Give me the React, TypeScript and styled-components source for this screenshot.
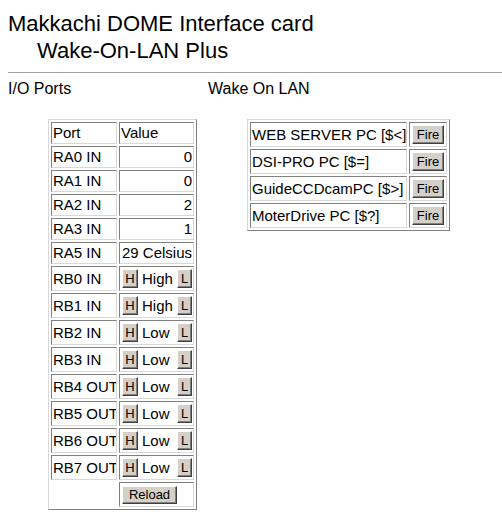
import React from 'react';
import styled, { createGlobalStyle } from 'styled-components';

const GlobalStyle = createGlobalStyle`
  html, body {
    margin: 0;
    padding: 0;
    background: #ffffff;
  }
  body {
    font-family: "Liberation Sans", Arial, sans-serif;
    color: #000000;
  }
`;

const Page = styled.div`
  padding: 10px 0 0 8px;
`;

const Title = styled.h1`
  margin: 0;
  font-size: 22px;
  font-weight: normal;
  line-height: 27px;
`;

const SubTitle = styled.span`
  display: block;
  padding-left: 29px;
`;

const Rule = styled.hr`
  height: 0;
  margin: 8px 0 7px;
  border: 0;
  border-top: 1px solid #a0a0a0;
`;

const Sections = styled.div`
  display: flex;
`;

const Section = styled.section<{ $width?: number; $indent: number }>`
  width: ${p => (p.$width ? `${p.$width}px` : 'auto')};
  flex: ${p => (p.$width ? 'none' : '1')};

  table {
    margin-left: ${p => p.$indent}px;
  }
`;

const Heading = styled.div`
  font-size: 16px;
  line-height: 18px;
  margin-bottom: 21px;
`;

const Grid = styled.table`
  border-collapse: separate;
  border-spacing: 2px;
  empty-cells: hide;
  border: 1px solid;
  border-color: #d8d8d8 #808080 #808080 #d8d8d8;
  font-size: 15px;
`;

const Cell = styled.td<{ $w: number; $h: number; $align?: 'left' | 'right' }>`
  box-sizing: border-box;
  width: ${p => p.$w}px;
  min-width: ${p => p.$w}px;
  max-width: ${p => p.$w}px;
  height: ${p => p.$h}px;
  padding: 0 1px;
  border: 1px solid;
  border-color: #808080 #d8d8d8 #d8d8d8 #808080;
  text-align: ${p => p.$align ?? 'left'};
  vertical-align: middle;
  white-space: nowrap;
  overflow: hidden;
  line-height: 18px;
`;

const Toggle = styled.div`
  display: flex;
  align-items: center;
  padding-left: 1px;
`;

const State = styled.span`
  padding-left: 4px;
`;

const Btn = styled.button<{ $w: number; $h: number; $push?: boolean }>`
  box-sizing: border-box;
  width: ${p => p.$w}px;
  height: ${p => p.$h}px;
  margin-left: ${p => (p.$push ? 'auto' : '0')};
  padding: 0;
  font: 13px "Liberation Sans", Arial, sans-serif;
  color: #000000;
  background: #d4d0c8;
  border: 1px solid;
  border-color: #ffffff #404040 #404040 #ffffff;
  box-shadow: inset -1px -1px 0 #808080;
  display: inline-flex;
  align-items: center;
  justify-content: center;
`;

const FireCell = styled(Cell)`
  text-align: center;
`;

const inputs = [
  { port: 'RA0 IN', value: '0' },
  { port: 'RA1 IN', value: '0' },
  { port: 'RA2 IN', value: '2' },
  { port: 'RA3 IN', value: '1' },
];

const outputs = [
  { port: 'RB0 IN', state: 'High' },
  { port: 'RB1 IN', state: 'High' },
  { port: 'RB2 IN', state: 'Low' },
  { port: 'RB3 IN', state: 'Low' },
  { port: 'RB4 OUT', state: 'Low' },
  { port: 'RB5 OUT', state: 'Low' },
  { port: 'RB6 OUT', state: 'Low' },
  { port: 'RB7 OUT', state: 'Low' },
];

const hosts = [
  'WEB SERVER PC [$<]',
  'DSI-PRO PC [$=]',
  'GuideCCDcamPC [$>]',
  'MoterDrive PC [$?]',
];

const App: React.FC = () => (
  <Page>
    <GlobalStyle />
    <Title>
      Makkachi DOME Interface card
      <SubTitle>Wake-On-LAN Plus</SubTitle>
    </Title>
    <Rule />
    <Sections>
      <Section $width={200} $indent={40}>
        <Heading>I/O Ports</Heading>
        <Grid>
          <tbody>
            <tr>
              <Cell $w={66} $h={22}>Port</Cell>
              <Cell $w={75} $h={22}>Value</Cell>
            </tr>
            {inputs.map(r => (
              <tr key={r.port}>
                <Cell $w={66} $h={22}>{r.port}</Cell>
                <Cell $w={75} $h={22} $align="right">{r.value}</Cell>
              </tr>
            ))}
            <tr>
              <Cell $w={66} $h={22}>RA5 IN</Cell>
              <Cell $w={75} $h={22} $align="right">29 Celsius</Cell>
            </tr>
            {outputs.map(r => (
              <tr key={r.port}>
                <Cell $w={66} $h={25}>{r.port}</Cell>
                <Cell $w={75} $h={25}>
                  <Toggle>
                    <Btn $w={16} $h={19}>H</Btn>
                    <State>{r.state}</State>
                    <Btn $w={15} $h={19} $push>L</Btn>
                  </Toggle>
                </Cell>
              </tr>
            ))}
            <tr>
              <Cell $w={66} $h={25}></Cell>
              <Cell $w={75} $h={25}>
                <Toggle>
                  <Btn $w={55} $h={18}>Reload</Btn>
                </Toggle>
              </Cell>
            </tr>
          </tbody>
        </Grid>
      </Section>
      <Section $indent={39}>
        <Heading>Wake On LAN</Heading>
        <Grid>
          <tbody>
            {hosts.map(h => (
              <tr key={h}>
                <Cell $w={157} $h={25}>{h}</Cell>
                <FireCell $w={38} $h={25}>
                  <Btn $w={32} $h={19}>Fire</Btn>
                </FireCell>
              </tr>
            ))}
          </tbody>
        </Grid>
      </Section>
    </Sections>
  </Page>
);

export default App;
